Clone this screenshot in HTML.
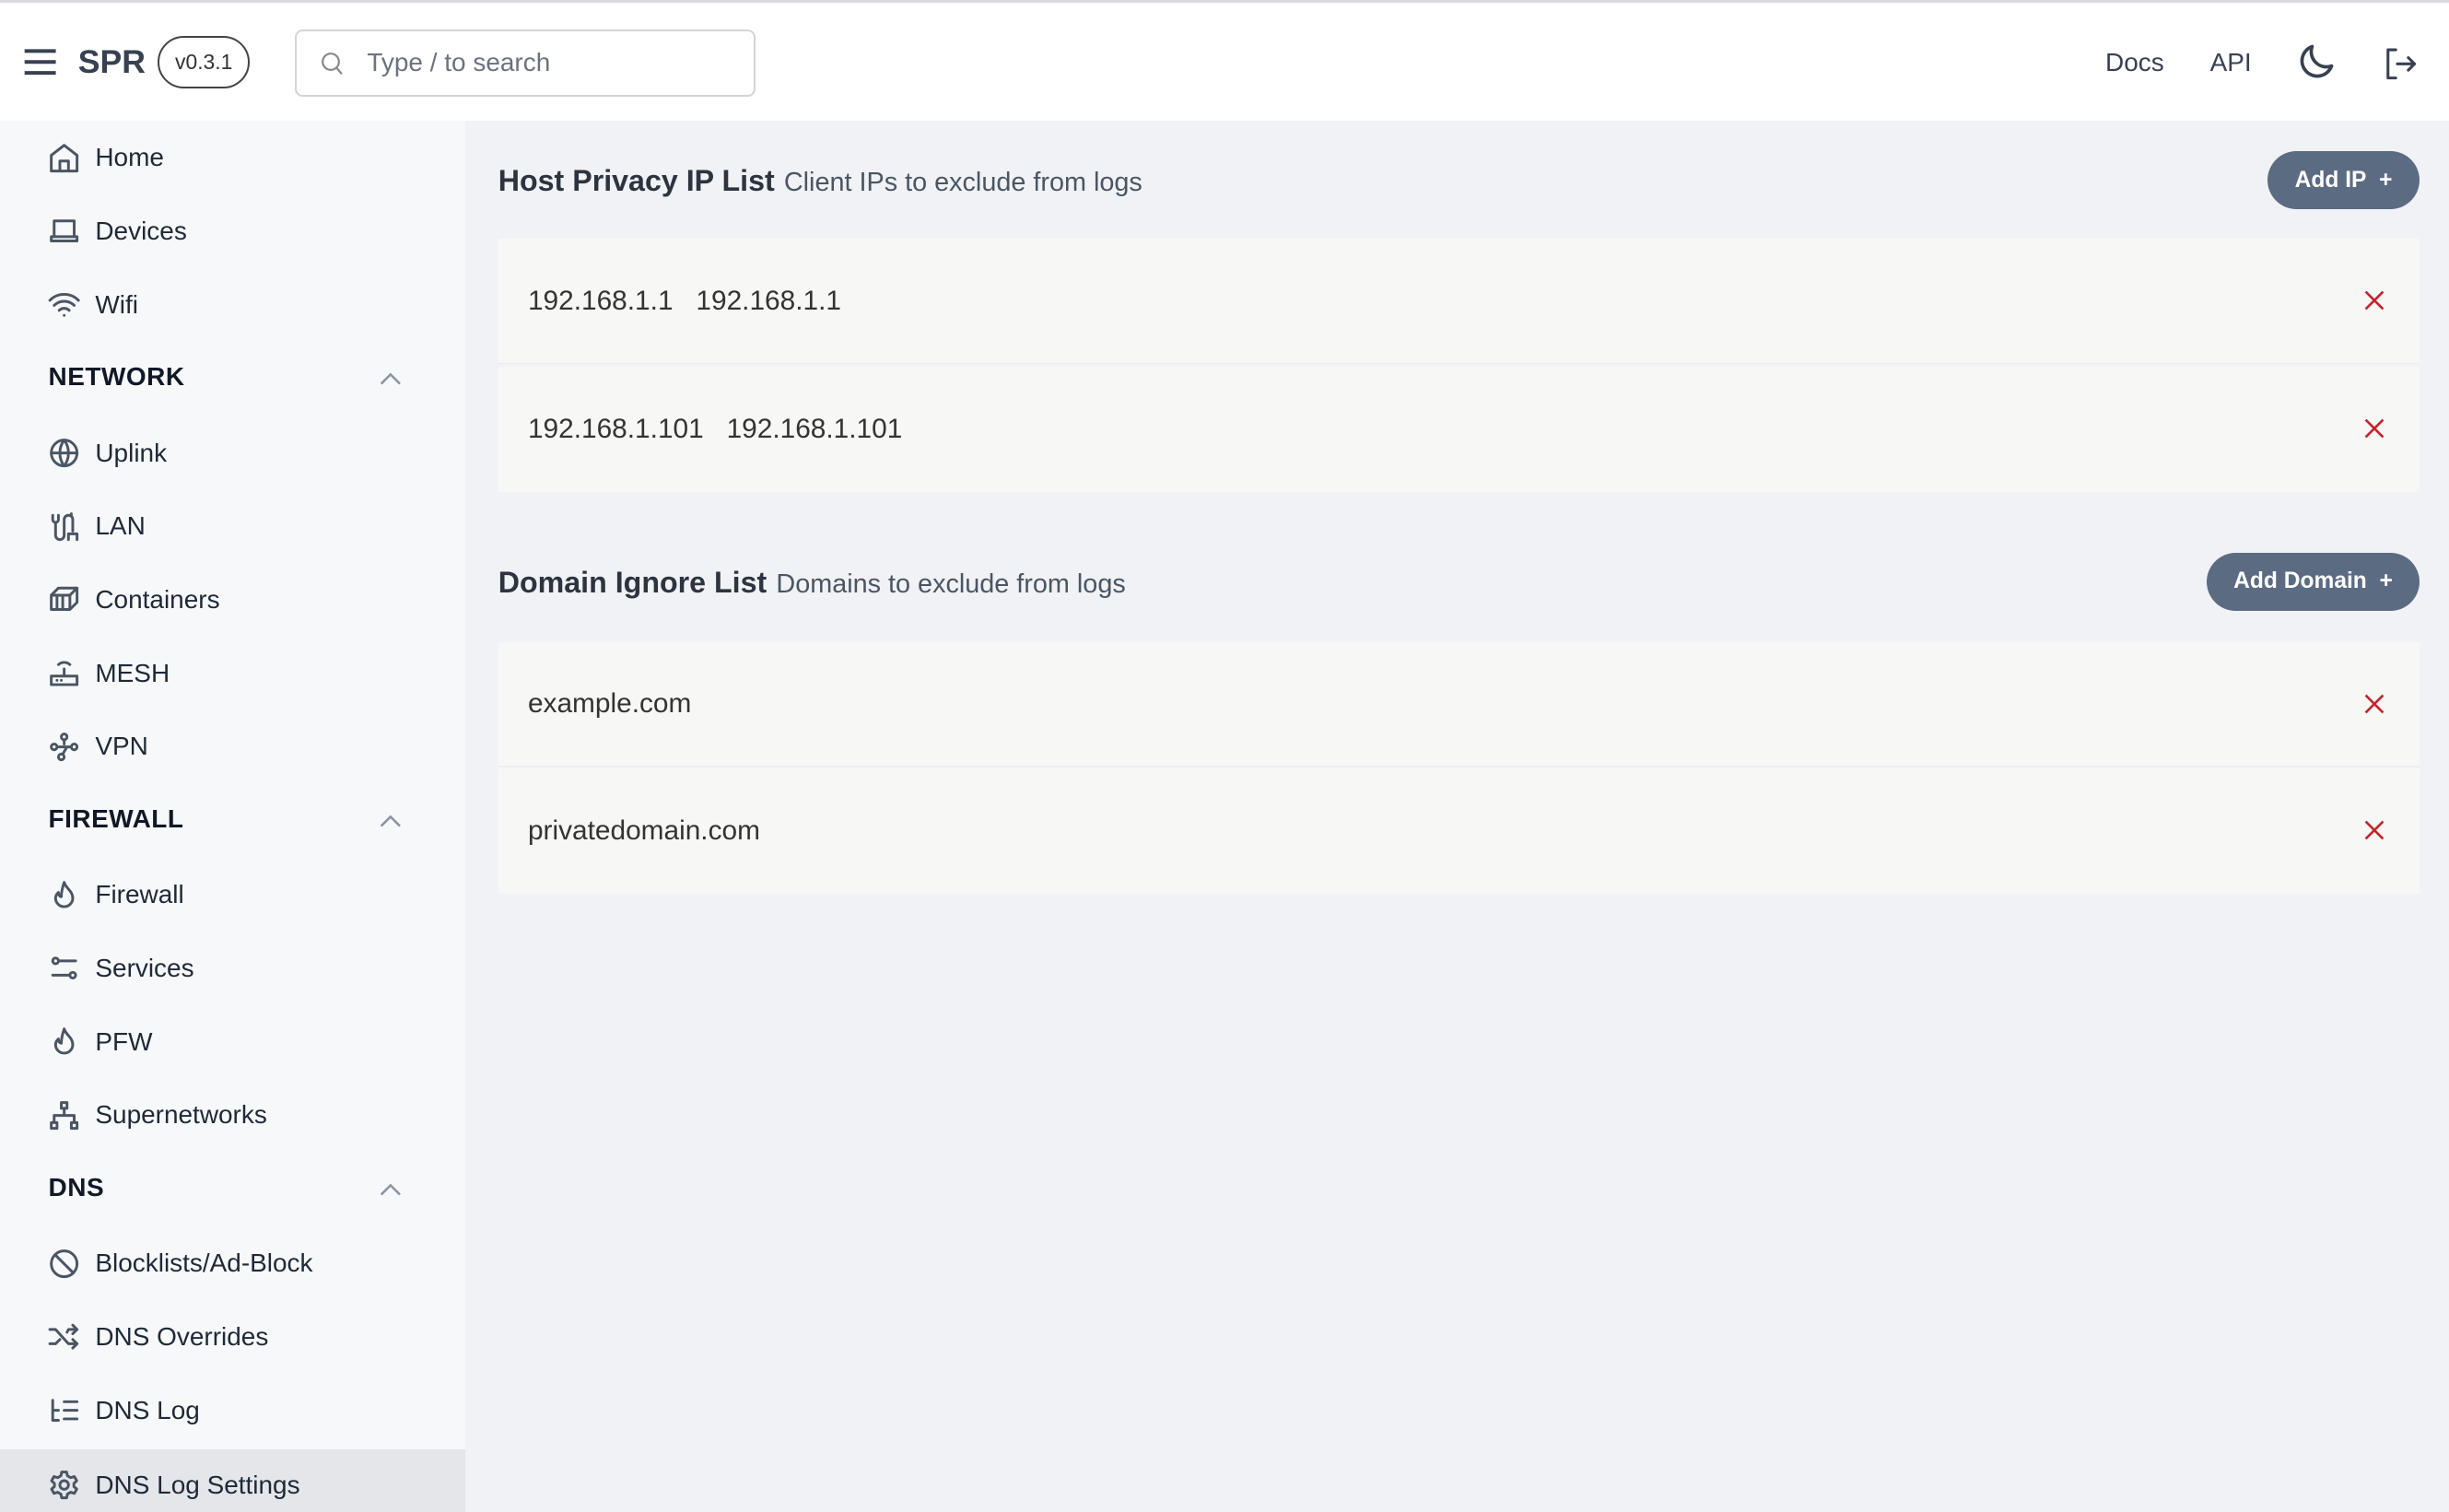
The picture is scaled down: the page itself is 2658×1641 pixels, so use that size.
<!DOCTYPE html>
<html><head><meta charset="utf-8"><style>
html{zoom:1.69515}
*{box-sizing:border-box;margin:0;padding:0}
body{width:1568px;height:962px;overflow:hidden;font-family:"Liberation Sans",sans-serif;background:#f0f2f5;color:#1f2937;position:relative}
.top{position:absolute;left:0;top:0;width:1568px;height:77px;background:#fff;border-top:2px solid #d9dade}
.abs{position:absolute}
.side{position:absolute;left:0;top:77px;width:298px;height:885px;background:#f7f8fa}
.it{position:absolute;left:30px;height:24px;display:flex;align-items:center;font-size:16.5px;color:#1f2937}
.it svg{width:22px;height:22px;flex:none;margin-right:9px;fill:none;stroke:#4b5563;stroke-width:1.9;stroke-linecap:round;stroke-linejoin:round}
.hd{position:absolute;left:31px;font-size:16.5px;font-weight:bold;color:#111827;letter-spacing:.3px}
.chev{position:absolute;left:243px;width:14px;height:10px}
.row{position:absolute;left:319px;width:1230px;height:80px;background:#f7f7f6;font-size:17.6px;color:#333;display:flex;align-items:center;padding-left:19px}
.x{position:absolute;right:22px;top:33px;width:13px;height:13px}
.btn{position:absolute;height:37px;border-radius:19px;background:#5b6b82;color:#fff;font-weight:bold;font-size:14.5px;display:flex;align-items:center;justify-content:center}
.title{position:absolute;left:319px;font-size:19px;font-weight:bold;color:#2d3440}
.title span{font-weight:normal;font-size:17px;color:#4b5563;margin-left:6px}
</style></head><body>
<div class="top">
 <svg class="abs" style="left:15px;top:29px" width="22" height="18" viewBox="0 0 22 18"><path d="M1 2h20M1 9h20M1 16h20" stroke="#374151" stroke-width="2.4"/></svg>
 <div class="abs" style="left:50px;top:26px;font-size:21px;font-weight:bold;color:#374151">SPR</div>
 <div class="abs" style="left:101px;top:21px;width:59px;height:34px;border:1.3px solid #444;border-radius:17px;font-size:13.5px;display:flex;align-items:center;justify-content:center;color:#333">v0.3.1</div>
 <div class="abs" style="left:189px;top:17px;width:295px;height:43px;border:1.5px solid #d4d4d8;border-radius:5px"></div>
 <svg class="abs" style="left:205px;top:31px" width="15" height="16" viewBox="0 0 15 16"><circle cx="6.5" cy="6.5" r="5.2" fill="none" stroke="#888" stroke-width="1.3"/><path d="M10.3 10.5l3.2 3.8" stroke="#888" stroke-width="1.3"/></svg>
 <div class="abs" style="left:235px;top:29px;font-size:16.5px;color:#6b7280">Type / to search</div>
 <div class="abs" style="left:1348px;top:29px;font-size:16.5px;color:#374151">Docs</div>
 <div class="abs" style="left:1415px;top:29px;font-size:16.5px;color:#374151">API</div>
 <svg class="abs" style="left:1470px;top:25px" width="26" height="26" viewBox="0 0 24 24"><path d="M21 14.5A9 9 0 0 1 9.5 3 9 9 0 1 0 21 14.5z" fill="none" stroke="#374151" stroke-width="2" stroke-linejoin="round"/></svg>
 <svg class="abs" style="left:1525px;top:27px" width="24" height="24" viewBox="0 0 24 24"><path d="M9 3H4v18h5M10 12h11M17 8l4 4-4 4" fill="none" stroke="#374151" stroke-width="1.8" stroke-linecap="round" stroke-linejoin="round"/></svg>
</div>
<div class="side">
 <div class="it" style="top:12px"><svg viewBox="0 0 24 24"><path d="M3 10l9-7 9 7v11H3zM9 21v-7h6v7"/></svg>Home</div>
 <div class="it" style="top:59px"><svg viewBox="0 0 24 24"><path d="M5 5h14v11H5zM3 16h18v3H3z"/></svg>Devices</div>
 <div class="it" style="top:106px"><svg viewBox="0 0 24 24"><path d="M2 9a14 14 0 0 1 20 0M5 12.5a10 10 0 0 1 14 0M8.5 16a5 5 0 0 1 7 0M12 19.5h.01"/></svg>Wifi</div>
 <div class="hd" style="top:155px">NETWORK</div>
 <svg class="chev" style="top:161px" viewBox="0 0 14 10"><path d="M1 8l6-6 6 6" fill="none" stroke="#8a94a3" stroke-width="1.5"/></svg>
 <div class="it" style="top:201px"><svg viewBox="0 0 24 24"><circle cx="12" cy="12" r="9"/><path d="M3 12h18M12 3c-4 5-4 13 0 18M12 3c4 5 4 13 0 18"/></svg>Uplink</div>
 <div class="it" style="top:248px"><svg viewBox="0 0 24 24"><path d="M4 4v3a2 2 0 0 0 4 0V4M6 9v9a3 3 0 0 0 6 0V7a3 3 0 0 1 6 0v8M15 21v-4h6v4M17 3v1"/></svg>LAN</div>
 <div class="it" style="top:295px"><svg viewBox="0 0 24 24"><path d="M3 9l5-5h13v10l-5 5H3zM3 9h13v10M16 9l5-5M7 9v10M11 9v10"/></svg>Containers</div>
 <div class="it" style="top:342px"><svg viewBox="0 0 24 24"><path d="M3 14h18v6H3zM12 14V9M8 6a6 6 0 0 1 8 0M7 17h.01M10 17h.01"/></svg>MESH</div>
 <div class="it" style="top:389px"><svg viewBox="0 0 24 24"><circle cx="12" cy="5" r="2"/><circle cx="5" cy="12" r="2"/><circle cx="19" cy="12" r="2"/><circle cx="10" cy="19" r="2"/><path d="M7 12h10M12 7l0 3M11 17l3-5"/></svg>VPN</div>
 <div class="hd" style="top:438px">FIREWALL</div>
 <svg class="chev" style="top:444px" viewBox="0 0 14 10"><path d="M1 8l6-6 6 6" fill="none" stroke="#8a94a3" stroke-width="1.5"/></svg>
 <div class="it" style="top:484px"><svg viewBox="0 0 24 24"><path d="M12 3c1 4 6 6 6 11a6 6 0 0 1-12 0c0-2 1-3 2-4 0 2 1 3 2 3 0-4 1-7 2-10z"/></svg>Firewall</div>
 <div class="it" style="top:531px"><svg viewBox="0 0 24 24"><circle cx="6" cy="7" r="2"/><circle cx="18" cy="17" r="2"/><path d="M8 7h12M4 17h12"/></svg>Services</div>
 <div class="it" style="top:578px"><svg viewBox="0 0 24 24"><path d="M12 3c1 4 6 6 6 11a6 6 0 0 1-12 0c0-2 1-3 2-4 0 2 1 3 2 3 0-4 1-7 2-10z"/></svg>PFW</div>
 <div class="it" style="top:625px"><svg viewBox="0 0 24 24"><path d="M10 3h4v4h-4zM3 17h4v4H3zM17 17h4v4h-4zM12 7v5M5 17v-5h14v5"/></svg>Supernetworks</div>
 <div class="hd" style="top:674px">DNS</div>
 <svg class="chev" style="top:680px" viewBox="0 0 14 10"><path d="M1 8l6-6 6 6" fill="none" stroke="#8a94a3" stroke-width="1.5"/></svg>
 <div class="it" style="top:720px"><svg viewBox="0 0 24 24"><circle cx="12" cy="12" r="9"/><path d="M5.6 5.6l12.8 12.8"/></svg>Blocklists/Ad-Block</div>
 <div class="it" style="top:767px"><svg viewBox="0 0 24 24"><path d="M2 7h4l9 10h6M2 17h4l3-3M14 9l1-2h6M18 4l3 3-3 3M18 14l3 3-3 3"/></svg>DNS Overrides</div>
 <div class="it" style="top:814px"><svg viewBox="0 0 24 24"><path d="M4 5v14h4M4 12h4M12 6h9M12 12h9M12 18h9"/></svg>DNS Log</div>
 <div class="abs" style="left:0;top:851px;width:298px;height:40px;background:#e4e6ea"></div>
 <div class="it" style="top:862px"><svg viewBox="0 0 24 24"><circle cx="12" cy="12" r="3"/><path d="M10.3 3h3.4l.6 2.6 2.2 1.3 2.6-.8 1.7 3-2 1.8v2.2l2 1.8-1.7 3-2.6-.8-2.2 1.3-.6 2.6h-3.4l-.6-2.6-2.2-1.3-2.6.8-1.7-3 2-1.8v-2.2l-2-1.8 1.7-3 2.6.8 2.2-1.3z"/></svg>DNS Log Settings</div>
</div>
<div class="title" style="top:105px">Host Privacy IP List<span>Client IPs to exclude from logs</span></div>
<div class="btn" style="left:1452px;top:97px;width:97px">Add IP&nbsp;&nbsp;+</div>
<div class="row" style="top:153px;border-bottom:1px solid #ebebeb">192.168.1.1&nbsp;&nbsp;&nbsp;192.168.1.1<svg class="x" viewBox="0 0 14 14"><path d="M1 1l12 12M13 1L1 13" stroke="#c0262d" stroke-width="1.7"/></svg></div>
<div class="row" style="top:235px">192.168.1.101&nbsp;&nbsp;&nbsp;192.168.1.101<svg class="x" viewBox="0 0 14 14"><path d="M1 1l12 12M13 1L1 13" stroke="#c0262d" stroke-width="1.7"/></svg></div>
<div class="title" style="top:362px">Domain Ignore List<span>Domains to exclude from logs</span></div>
<div class="btn" style="left:1413px;top:354px;width:136px">Add Domain&nbsp;&nbsp;+</div>
<div class="row" style="top:411px;border-bottom:1px solid #ebebeb">example.com<svg class="x" viewBox="0 0 14 14"><path d="M1 1l12 12M13 1L1 13" stroke="#c0262d" stroke-width="1.7"/></svg></div>
<div class="row" style="top:492px">privatedomain.com<svg class="x" viewBox="0 0 14 14"><path d="M1 1l12 12M13 1L1 13" stroke="#c0262d" stroke-width="1.7"/></svg></div>
</body></html>
